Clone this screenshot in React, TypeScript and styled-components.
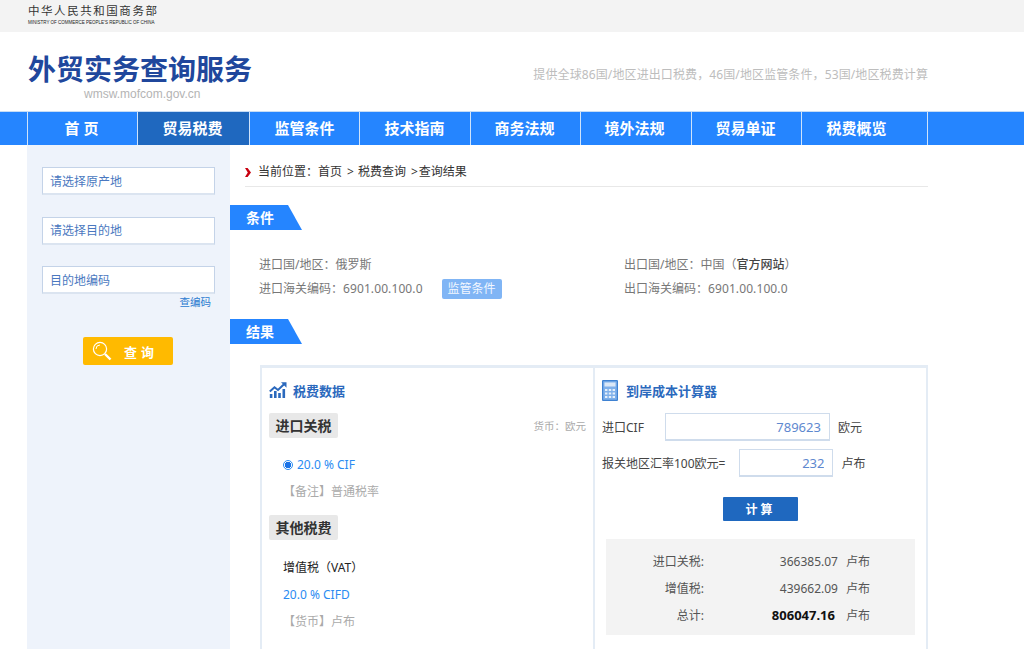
import React from 'react';
import styled, { createGlobalStyle } from 'styled-components';

const GlobalStyle = createGlobalStyle`
  html, body {
    margin: 0;
    height: 649px;
    overflow: hidden;
    background: #fff;
    font-family: "Noto Sans", "Noto Sans CJK SC", sans-serif;
    font-size: 12px;
    color: #333;
  }
  * { box-sizing: border-box; }
`;

const TopBar = styled.div`
  height: 32px;
  background: #f3f3f3;
  padding: 4px 0 0 28px;
`;
const MinistryCn = styled.div`
  font-size: 11.5px;
  line-height: 13px;
  letter-spacing: 1.55px;
  color: #333;
  white-space: nowrap;
`;
const MinistryEn = styled.div`
  font-family: "Liberation Sans", sans-serif;
  font-size: 4.5px;
  line-height: 7px;
  margin-top: 2px;
  color: #222;
  white-space: nowrap;
`;

const Header = styled.div`
  height: 79px;
  padding: 0 96px 0 28px;
  display: flex;
  justify-content: space-between;
`;
const Brand = styled.div`
  padding-top: 17px;
`;
const BrandTitle = styled.div`
  font-size: 28px;
  line-height: 40px;
  font-weight: 700;
  color: #20479c;
  white-space: nowrap;
`;
const BrandUrl = styled.div`
  font-family: "Liberation Sans", sans-serif;
  font-size: 12px;
  line-height: 18px;
  color: #b4b4b4;
  margin: -4px 0 0 56px;
`;
const Slogan = styled.div`
  font-size: 12px;
  letter-spacing: 0.11px;
  line-height: 18px;
  color: #bdbdbd;
  padding-top: 34px;
  white-space: nowrap;
`;

const Nav = styled.nav`
  height: 34px;
  background: #2585ff;
  border-top: 1px solid #c6dcf5;
  padding-left: 27px;
  display: flex;
`;
const NavItem = styled.a<{ $w: number; $pr: number; $active?: boolean }>`
  width: ${(p) => p.$w}px;
  padding-right: ${(p) => p.$pr}px;
  border-left: 1px solid #cfe3fb;
  background: ${(p) => (p.$active ? '#1f68bf' : 'transparent')};
  color: #fff;
  font-size: 15px;
  font-weight: 700;
  line-height: 33px;
  text-align: center;
  white-space: pre;
`;
const NavEnd = styled.div`
  width: 1px;
  background: #cfe3fb;
`;

const Main = styled.div`
  display: flex;
  padding: 0 96px 0 27px;
`;
const Sidebar = styled.aside`
  width: 203px;
  height: 504px;
  flex: none;
  background: #eef3fb;
  padding: 22px 15px 0;
`;
const SideInput = styled.input`
  display: block;
  width: 173px;
  height: 28px;
  border: 1px solid #c4d3e8;
  border-bottom-width: 2px;
  border-bottom-color: #dbe4f0;
  background: #fff;
  padding: 0 7px;
  margin-bottom: 21.5px;
  font: inherit;
  font-size: 12px;
  color: #4a78c0;
  outline: none;
`;
const CodeLink = styled.a`
  display: block;
  width: 169px;
  text-align: right;
  margin-top: -22.5px;
  font-size: 10.5px;
  line-height: 18px;
  color: #2b7bd0;
`;
const SearchButton = styled.button`
  display: flex;
  align-items: center;
  width: 90px;
  height: 28px;
  margin: 26px 0 0 41px;
  padding: 0 0 0 9px;
  border: 0;
  border-radius: 2px;
  background: #ffba00;
  color: #fff;
  font: inherit;
  font-size: 13px;
  font-weight: 700;
  letter-spacing: 4px;
  span { margin-left: 12px; }
`;

const Content = styled.section`
  flex: 1;
  min-width: 0;
`;
const Crumbs = styled.div`
  margin-left: 15px;
  height: 42px;
  padding-top: 16px;
  border-bottom: 1px solid #e8e8e8;
  line-height: 22px;
  color: #333;
  display: flex;
  align-items: flex-start;
  white-space: pre;
  svg { margin: 7px 7px 0 0; }
`;
const CrumbSep = styled.span<{ $after: number }>`
  margin: 0 ${(p) => p.$after}px 0 5px;
`;
const SectionTag = styled.div<{ $top: number }>`
  width: 72px;
  height: 25px;
  margin-top: ${(p) => p.$top}px;
  padding-left: 16px;
  background: #2585ff;
  clip-path: polygon(0 0, 58px 0, 100% 100%, 0 100%);
  color: #fff;
  font-size: 14px;
  font-weight: 700;
  line-height: 25px;
`;
const Conditions = styled.div`
  margin: 23px 0 0 29px;
  display: grid;
  grid-template-columns: 365px 1fr;
  grid-auto-rows: 24px;
  line-height: 24px;
  color: #777;
`;
const CondCell = styled.div`
  display: flex;
  align-items: center;
  white-space: pre;
`;
const CondStrong = styled.span`
  color: #444;
  font-weight: 500;
`;
const HsCode = styled.span`
  letter-spacing: 0.1px;
`;
const TagButton = styled.span`
  width: 60px;
  height: 20px;
  margin-left: 19px;
  background: #80b5f5;
  border-radius: 2px;
  color: #f2f7ff;
  line-height: 20px;
  text-align: center;
`;

const Panel = styled.div`
  margin: 21px 0 0 30px;
  height: 284px;
  border: 2px solid #e4ecf5;
  border-top-width: 3px;
  border-bottom: 0;
  display: flex;
`;
const DataCol = styled.div`
  width: 333px;
  flex: none;
  border-right: 2px solid #e4ecf5;
  padding: 0 7px;
`;
const CalcCol = styled.div`
  flex: 1;
  padding: 0 10px 0 7px;
`;
const ColTitle = styled.div<{ $gap: number }>`
  height: 45px;
  display: flex;
  align-items: center;
  gap: ${(p) => p.$gap}px;
  padding-bottom: 1px;
  color: #2b69bd;
  font-size: 13px;
  font-weight: 700;
`;
const ChipRow = styled.div`
  display: flex;
  align-items: center;
  justify-content: space-between;
`;
const Chip = styled.div`
  width: 69px;
  height: 25px;
  background: #e8e8e8;
  border-radius: 2px;
  color: #333;
  font-size: 14px;
  font-weight: 700;
  line-height: 25px;
  text-align: center;
`;
const Currency = styled.div`
  font-size: 10.5px;
  color: #aaa;
`;
const Line = styled.div<{ $tone: 'blue' | 'gray' | 'dark' }>`
  margin-left: 14px;
  height: 27px;
  line-height: 27px;
  white-space: pre;
  display: flex;
  align-items: center;
  color: ${(p) => ({ blue: '#2a8bf2', gray: '#aaa', dark: '#222' })[p.$tone]};
`;
const Radio = styled.span`
  width: 10px;
  height: 10px;
  margin-right: 4px;
  border: 1px solid #2a8bf2;
  border-radius: 50%;
  background: radial-gradient(circle, #1a73e8 0 3px, #fff 3.5px);
`;
const LineGroup = styled.div<{ $top: number; $bottom: number }>`
  margin: ${(p) => p.$top}px 0 ${(p) => p.$bottom}px;
`;

const CalcRow = styled.div`
  display: flex;
  align-items: center;
  height: 28px;
  margin-bottom: 8px;
  white-space: pre;
  color: #444;
`;
const CalcInput = styled.input<{ $w: number; $ml: number }>`
  width: ${(p) => p.$w}px;
  height: 28px;
  margin: 0 8px 0 ${(p) => p.$ml}px;
  border: 1px solid #cfdcec;
  border-bottom-width: 2px;
  padding: 0 8px;
  background: #fff;
  color: #5e88cf;
  font: inherit;
  font-size: 13px;
  text-align: right;
  outline: none;
`;
const CalcButton = styled.button`
  display: block;
  width: 75px;
  height: 24px;
  margin: 20px 0 0 121px;
  border: 0;
  border-radius: 1px;
  background: #1f68bf;
  color: #fff;
  font: inherit;
  font-size: 12px;
  font-weight: 700;
  letter-spacing: 3px;
`;
const ResultBox = styled.div`
  width: 309px;
  height: 96px;
  margin: 18px 0 0 4px;
  padding-top: 9px;
  background: #f3f3f3;
`;
const ResultRow = styled.div`
  display: grid;
  grid-template-columns: 98px 134px 1fr;
  height: 27px;
  line-height: 27px;
  color: #555;
`;
const ResultLabel = styled.div`
  text-align: right;
`;
const ResultValue = styled.div<{ $bold?: boolean }>`
  text-align: right;
  font-size: ${(p) => (p.$bold ? 13 : 12)}px;
  font-weight: ${(p) => (p.$bold ? 700 : 400)};
  padding-right: ${(p) => (p.$bold ? 3 : 0)}px;
  color: ${(p) => (p.$bold ? '#111' : '#555')};
`;
const ResultUnit = styled.div`
  padding-left: 8px;
`;

const navItems = [
  { label: '首 页', w: 110, pr: 2 },
  { label: '贸易税费', w: 112, pr: 2, active: true },
  { label: '监管条件', w: 110, pr: 0 },
  { label: '技术指南', w: 111, pr: 1 },
  { label: '商务法规', w: 110, pr: 2 },
  { label: '境外法规', w: 111, pr: 3 },
  { label: '贸易单证', w: 110, pr: 2 },
  { label: '税费概览', w: 126, pr: 16 },
];

const results = [
  { label: '进口关税:', value: '366385.07' },
  { label: '增值税:', value: '439662.09' },
  { label: '总计:', value: '806047.16', bold: true },
];

const ChartIcon = () => (
  <svg width="18" height="16" viewBox="0 0 18 16">
    <path d="M0.8 9.5 L5.5 5.2 L9 8 L15 2.2" fill="none" stroke="#2b69bd" strokeWidth="2" />
    <path d="M12 0.3 H17.5 V5.8 Z" fill="#2b69bd" />
    <path d="M0.8 12h2.6v4H0.8zM5 9h2.6v7H5zM9.2 11h2.6v5H9.2zM13.5 7h2.6v9h-2.6z" fill="#2b69bd" />
  </svg>
);

const CalculatorIcon = () => (
  <svg width="16" height="21" viewBox="0 0 16 21">
    <rect x="0.6" y="0.6" width="14.8" height="19.8" rx="0.5" fill="#7fb0ea" stroke="#3f82d2" strokeWidth="1.2" />
    <rect x="2.5" y="2.5" width="11" height="4" fill="#dbe8f7" />
    <path
      d="M3 9h2.4v2H3zM6.8 9h2.4v2H6.8zM10.6 9H13v2h-2.4zM3 12.5h2.4v2H3zM6.8 12.5h2.4v2H6.8zM10.6 12.5H13v2h-2.4zM3 16h2.4v2H3zM6.8 16h2.4v2H6.8zM10.6 16H13v2h-2.4z"
      fill="#e6f0fb"
    />
  </svg>
);

const SearchIcon = () => (
  <svg width="20" height="20" viewBox="0 0 20 20" fill="none" stroke="#fff">
    <circle cx="8" cy="8" r="6.6" strokeWidth="1.2" />
    <path d="M4 8A4 4 0 0 1 8 4" strokeWidth="1" />
    <path d="M13 13 L18.5 18.5" strokeWidth="2.4" />
  </svg>
);

const Chevron = () => (
  <svg width="6" height="9" viewBox="0 0 6 9">
    <path d="M0 0 H2.6 L6 4.5 L2.6 9 H0 L2.8 4.5 Z" fill="#c8000f" />
  </svg>
);

const App = () => (
  <>
    <GlobalStyle />
    <TopBar>
      <MinistryCn>中华人民共和国商务部</MinistryCn>
      <MinistryEn>MINISTRY OF COMMERCE PEOPLE'S REPUBLIC OF CHINA</MinistryEn>
    </TopBar>
    <Header>
      <Brand>
        <BrandTitle>外贸实务查询服务</BrandTitle>
        <BrandUrl>wmsw.mofcom.gov.cn</BrandUrl>
      </Brand>
      <Slogan>提供全球86国/地区进出口税费，46国/地区监管条件，53国/地区税费计算</Slogan>
    </Header>
    <Nav>
      {navItems.map((item) => (
        <NavItem key={item.label} $w={item.w} $pr={item.pr} $active={item.active}>
          {item.label}
        </NavItem>
      ))}
      <NavEnd />
    </Nav>
    <Main>
      <Sidebar>
        <SideInput readOnly defaultValue="请选择原产地" />
        <SideInput readOnly defaultValue="请选择目的地" />
        <SideInput readOnly defaultValue="目的地编码" />
        <CodeLink>查编码</CodeLink>
        <SearchButton>
          <SearchIcon />
          <span>查询</span>
        </SearchButton>
      </Sidebar>
      <Content>
        <Crumbs>
          <Chevron />
          当前位置：首页
          <CrumbSep $after={4}>&gt;</CrumbSep>
          税费查询
          <CrumbSep $after={1}>&gt;</CrumbSep>
          查询结果
        </Crumbs>
        <SectionTag $top={18}>条件</SectionTag>
        <Conditions>
          <CondCell>进口国/地区：俄罗斯</CondCell>
          <CondCell>
            出口国/地区：中国（<CondStrong>官方网站</CondStrong>）
          </CondCell>
          <CondCell>
            进口海关编码：<HsCode>6901.00.100.0</HsCode>
            <TagButton>监管条件</TagButton>
          </CondCell>
          <CondCell>
            出口海关编码：<HsCode>6901.00.100.0</HsCode>
          </CondCell>
        </Conditions>
        <SectionTag $top={18}>结果</SectionTag>
        <Panel>
          <DataCol>
            <ColTitle $gap={6}>
              <ChartIcon />
              税费数据
            </ColTitle>
            <ChipRow>
              <Chip>进口关税</Chip>
              <Currency>货币：欧元</Currency>
            </ChipRow>
            <LineGroup $top={13} $bottom={10}>
              <Line $tone="blue">
                <Radio />
                20.0 % CIF
              </Line>
              <Line $tone="gray">【备注】普通税率</Line>
            </LineGroup>
            <Chip>其他税费</Chip>
            <LineGroup $top={14} $bottom={0}>
              <Line $tone="dark">增值税（VAT）</Line>
              <Line $tone="blue">20.0 % CIFD</Line>
              <Line $tone="gray">【货币】卢布</Line>
            </LineGroup>
          </DataCol>
          <CalcCol>
            <ColTitle $gap={8}>
              <CalculatorIcon />
              到岸成本计算器
            </ColTitle>
            <CalcRow>
              进口CIF
              <CalcInput $w={165} $ml={21} readOnly defaultValue="789623" />
              欧元
            </CalcRow>
            <CalcRow>
              报关地区汇率100欧元=
              <CalcInput $w={94} $ml={14} readOnly defaultValue="232" />
              卢布
            </CalcRow>
            <CalcButton>计算</CalcButton>
            <ResultBox>
              {results.map((r) => (
                <ResultRow key={r.label}>
                  <ResultLabel>{r.label}</ResultLabel>
                  <ResultValue $bold={r.bold}>{r.value}</ResultValue>
                  <ResultUnit>卢布</ResultUnit>
                </ResultRow>
              ))}
            </ResultBox>
          </CalcCol>
        </Panel>
      </Content>
    </Main>
  </>
);

export default App;
